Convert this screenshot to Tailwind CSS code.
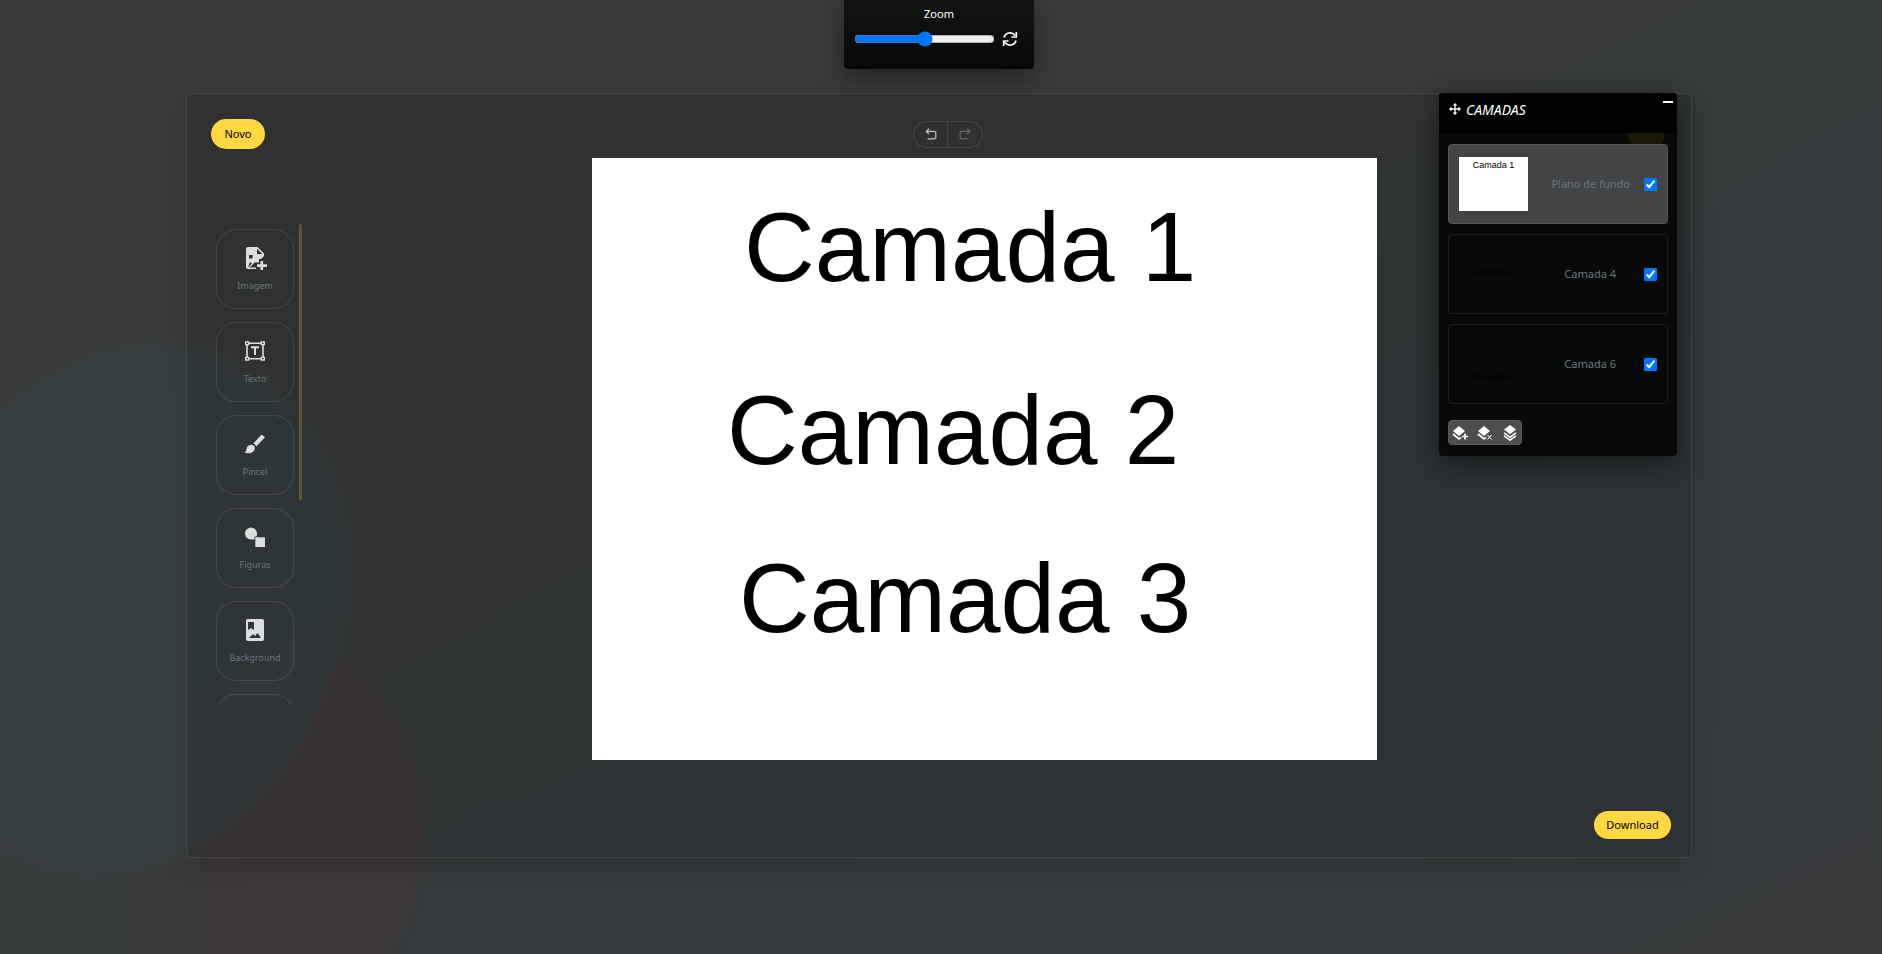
<!DOCTYPE html>
<html lang="pt-BR">
<head>
<meta charset="utf-8">
<title>Editor</title>
<script src="https://cdn.jsdelivr.net/npm/@tailwindcss/browser@4"></script>
</head>
<body class="font-['Noto_Sans',sans-serif] text-[11px] text-white">
<div class="relative min-h-screen overflow-hidden bg-linear-to-br from-[#393b3a] from-40% via-[#363a3c] via-60% to-[#383a3c]">

<!-- backdrop blobs -->
<div class="absolute left-[77px] top-[630px] h-[400px] w-[346px] rounded-[50%] bg-linear-to-r from-[#3e3839]/0 from-10% to-[#3e3838] to-50% blur-[4px]"></div>
<div class="absolute left-[-92px] top-[340px] h-[540px] w-[432px] rotate-[19deg] rounded-[50%] bg-linear-to-br from-[#353f3e] via-[#373f43] to-[#394041] blur-[4px]"></div>

<div class="relative flex min-h-screen flex-col pt-[93px] pr-[190px] pb-24 pl-[186px]">
  <main class="relative flex flex-1 flex-col rounded-md border border-white/10 bg-black/15 px-6 pt-[25px] pb-[18px] shadow-[0_8px_24px_rgba(0,0,0,0.15)]">
    <header class="grid grid-cols-3 items-center">
      <button class="h-[30px] w-[54px] justify-self-start rounded-full bg-[#ffd740] text-black">Novo</button>
      <div class="justify-self-center pl-[18px]">
        <div class="flex h-[27px] w-[70px] rounded-full border border-white/10">
          <button aria-label="Desfazer" class="flex flex-1 items-center justify-center border-r border-white/10 text-white/70">
            <svg class="size-3" viewBox="0 0 12 12" fill="none" stroke="currentColor" stroke-width="1.2"><path d="M4 .7 1.2 3.4 4 6.200M1.400 3.400h7.600A1.600 1.600 0 0 1 10.800 5v4.200A1.600 1.600 0 0 1 9.200 10.900H2.600"/></svg>
          </button>
          <button aria-label="Refazer" class="flex flex-1 items-center justify-center text-white/25">
            <svg class="size-3" viewBox="0 0 12 12" fill="none" stroke="currentColor" stroke-width="1.2"><path d="M8 .7l2.800 2.700L8 6.200M10.600 3.400H3A1.600 1.600 0 0 0 1.200 5v4.200a1.600 1.600 0 0 0 1.600 1.700h6.600"/></svg>
          </button>
        </div>
      </div>
    </header>

    <div class="mt-[9px] flex flex-1 items-start">
      <nav aria-label="Ferramentas" class="mt-[66px] flex h-[481px] w-[91px] justify-between overflow-hidden pl-[5px]">
        <div class="flex flex-col gap-[13px] pt-[5px] text-[9px] text-[#6c757d]">
          <button class="flex h-20 w-[78px] shrink-0 flex-col items-center rounded-[20px] border border-white/10 pt-4">
            <svg class="size-6 text-[#dcdddd]" viewBox="0 0 24 24" fill="currentColor"><path fill-rule="evenodd" d="M5 1h9.500L21 7.500V10l-3 3h-2v3.500h-4.500L9 19.500 6 21.500h7V23H5a2 2 0 0 1-2-2V3a2 2 0 0 1 2-2zm9 1.800V8h5.200zM6 9v3.600h3.600V9zM5 21.500l4-4-2-1.500z"/><path d="M17.500 15h2.600v3.300H24v2.600h-3.900V24.500h-2.600v-3.600H14v-2.600h3.500z"/></svg>
            <span class="mt-2.5 leading-3">Imagem</span>
          </button>
          <button class="flex h-20 w-[78px] shrink-0 flex-col items-center rounded-[20px] border border-white/10 pt-4">
            <svg class="size-6 text-[#dcdddd]" viewBox="0 0 24 24" fill="none" stroke="currentColor" stroke-width="1.4"><path d="M6 4.200h12M6 19.800h12M4 6v12M20 6v12" stroke-width="1.6"/><path d="M2.700 3h3v2.600h-3zM18.300 3h3v2.600h-3zM2.700 18.400h3V21h-3zM18.300 18.400h3V21h-3z"/><path d="M8 8.300h8M12 8.300V16" stroke-width="2"/></svg>
            <span class="mt-2.5 leading-3">Texto</span>
          </button>
          <button class="flex h-20 w-[78px] shrink-0 flex-col items-center rounded-[20px] border border-white/10 pt-4">
            <svg class="size-6 text-[#dcdddd]" viewBox="0 0 24 24" fill="currentColor"><path d="M18.700 2.600 22 5.200 13.200 14.600a6 6 0 0 0-3-3zM9.200 12.900c1.600.3 2.600 1.600 2.700 3.100C11.500 20.500 6 22.500 1.500 20.500 3.800 19.500 3 18 4 15.500c.9-2 3-3 5.200-2.600z"/></svg>
            <span class="mt-2.5 leading-3">Pincel</span>
          </button>
          <button class="flex h-20 w-[78px] shrink-0 flex-col items-center rounded-[20px] border border-white/10 pt-4">
            <svg class="size-6 text-[#dcdddd]" viewBox="0 0 24 24" fill="currentColor"><path d="M14 8.500A6 6 0 1 0 8 14.500h3.500V11.500h2A6 6 0 0 0 14 8.500zM12.300 12.300H22V22H12.300z"/></svg>
            <span class="mt-2.5 leading-3">Figuras</span>
          </button>
          <button class="flex h-20 w-[78px] shrink-0 flex-col items-center rounded-[20px] border border-white/10 pt-4">
            <svg class="size-6 text-[#dcdddd]" viewBox="0 0 24 24" fill="currentColor"><path fill-rule="evenodd" d="M5 1h14a2 2 0 0 1 2 2v18a2 2 0 0 1-2 2H5a2 2 0 0 1-2-2V3a2 2 0 0 1 2-2zm0 3v8l3-2 3 2V4zm1 16h12l-3.500-5-2.500 3-2-2z"/></svg>
            <span class="mt-2.5 leading-3">Background</span>
          </button>
          <button aria-label="Mais" class="h-20 w-[78px] shrink-0 rounded-[20px] border border-white/10"></button>
        </div>
        <div class="h-[276px] w-[3px] rounded-full bg-[#5e5633]"></div>
      </nav>

      <!-- drawing surface -->
      <section aria-label="Tela" class="relative mr-[290px] ml-auto h-[602px] w-[785px] bg-white font-['Liberation_Sans',sans-serif] text-[98px] leading-[100px] text-black">
        <div class="absolute left-[152px] top-[39px] whitespace-nowrap">Camada 1</div>
        <div class="absolute left-[135px] top-[222px] whitespace-nowrap">Camada 2</div>
        <div class="absolute left-[147px] top-[390px] whitespace-nowrap">Camada 3</div>
      </section>
    </div>

    <button class="-mr-1 h-7 w-[77px] self-end rounded-full bg-[#ffd740] text-black">Download</button>
  </main>
</div>

<!-- zoom panel -->
<div class="absolute left-1/2 top-0 -ml-[97px] flex h-[69px] w-[190px] flex-col rounded-b bg-linear-to-b from-[#131414] to-[#070808] px-2.5 pt-1.5 shadow-[0_8px_24px_rgba(0,0,0,0.4)]">
  <label for="zoom" class="text-center leading-4">Zoom</label>
  <div class="mt-[9px] flex items-center gap-[7px]">
    <input id="zoom" type="range" min="0" max="100" value="50" class="m-0 h-4 w-[141px]">
    <button aria-label="Redefinir zoom">
      <svg class="size-4" viewBox="0 0 16 16" fill="none" stroke="currentColor" stroke-width="1.700"><path d="M2 6.500A6.200 6.200 0 0 1 13 4.500M14.300 1v5H9.500M14 9.500A6.200 6.200 0 0 1 3 11.500M1.700 15v-5h4.800"/></svg>
    </button>
  </div>
</div>

<!-- layers panel -->
<aside class="absolute right-[205px] top-[93px] w-[238px] overflow-hidden rounded bg-[#080909] shadow-[0_8px_28px_rgba(0,0,0,0.45)]">
  <div class="absolute top-[26px] right-3 h-[30px] w-[37px] rounded-full bg-[#1b1806]"></div>
  <div class="relative flex h-10 items-start bg-black pt-1.5 pl-2.5">
    <svg class="mt-1 size-3" viewBox="0 0 12 12" fill="currentColor"><path d="M6 0l2.400 2.500H6.700v2.800h2.800V3.600L12 6 9.500 8.400V6.700H6.700v2.800h1.700L6 12 3.600 9.500h1.700V6.700H2.500v1.700L0 6l2.500-2.400v1.700h2.800V2.500H3.600z"/></svg>
    <h2 class="ml-[5px] text-[14px] leading-[22px] italic">CAMADAS</h2>
    <button aria-label="Minimizar" class="mt-0.5 mr-1 ml-auto h-0.5 w-2.5 bg-white"></button>
  </div>
  <div class="relative flex flex-col gap-2.5 px-[9px] pt-[11px] pb-[11px] text-[#6c757d]">
    <div class="flex h-20 items-center rounded border border-[#56575a] bg-[#434446] px-2.5">
      <div class="h-[54px] w-[69px] bg-white text-center font-['Liberation_Sans',sans-serif] text-[9px] leading-4 text-black">Camada 1</div>
      <label for="c1" class="ml-auto">Plano de fundo</label>
      <input id="c1" type="checkbox" checked class="ml-3.5 size-[13px]">
    </div>
    <div class="flex h-20 items-center rounded border border-[#1d1e1e] px-2.5">
      <div class="h-[54px] w-[69px] pt-4 pr-1 text-center font-['Liberation_Sans',sans-serif] text-[9px] leading-4 text-black">Camada 2</div>
      <label for="c2" class="ml-auto">Camada 4</label>
      <input id="c2" type="checkbox" checked class="ml-7 size-[13px]">
    </div>
    <div class="flex h-20 items-center rounded border border-[#1d1e1e] px-2.5">
      <div class="h-[54px] w-[69px] pt-8 pr-1 text-center font-['Liberation_Sans',sans-serif] text-[9px] leading-4 text-black">Camada 3</div>
      <label for="c3" class="ml-auto">Camada 6</label>
      <input id="c3" type="checkbox" checked class="ml-7 size-[13px]">
    </div>
    <div class="mt-1.5 flex h-[25px] w-[74px] items-center justify-center gap-[9px] rounded border border-[#5a5a5a] bg-[#4d4e4e] text-white">
      <button aria-label="Adicionar camada"><svg class="size-4" viewBox="0 0 16 16" fill="currentColor"><path d="M7 1l6 5-6 5-6-5z"/><path d="M1 9l6 5 2-1.600M13 8.500v6M10 11.500h6" fill="none" stroke="currentColor" stroke-width="1.700"/></svg></button>
      <button aria-label="Remover camada"><svg class="size-4" viewBox="0 0 16 16" fill="currentColor"><path d="M7 1l6 5-6 5-6-5z"/><path d="M1 9l6 5 2-1.600" fill="none" stroke="currentColor" stroke-width="1.700"/><path d="M10.500 10l4 4.500M14.500 10l-4 4.500" fill="none" stroke="currentColor"/></svg></button>
      <button aria-label="Mesclar camadas"><svg class="size-4" viewBox="0 0 16 16" fill="currentColor"><path d="M8 0l6 4.600-6 4.600-6-4.600z"/><path d="M2 7.800l6 4.400 6-4.400M2 10.800l6 4.400 6-4.400" fill="none" stroke="currentColor" stroke-width="1.500"/></svg></button>
    </div>
  </div>
</aside>
</div>
</body>
</html>
